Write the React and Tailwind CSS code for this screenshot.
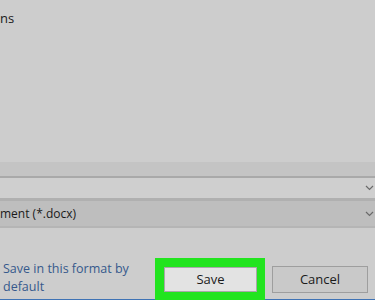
import React from "react";

function Chevron() {
  return (
    <svg width="9" height="6" viewBox="0 0 9 6" className="shrink-0">
      <path d="M1 1 L4.5 4.5 L8 1" fill="none" stroke="#6a6a6a" strokeWidth="1.2" />
    </svg>
  );
}

export default function App() {
  return (
    <div
      className="w-[375px] h-[300px] overflow-hidden bg-[#cdcdcd] flex flex-col text-[#1a1a1a]"
      style={{ fontFamily: '"Open Sans", "Noto Sans", sans-serif' }}
    >
      <div className="h-[162px] pt-[9px]">
        <div className="text-[13px] leading-[18px]">ns</div>
      </div>
      <div className="h-[14px] bg-[#c4c4c4]" />
      <div className="h-[2px] bg-[#a9a9a9]" />
      <div className="h-[20px] bg-[#cfcfcf] flex items-center justify-end pr-[1px]">
        <Chevron />
      </div>
      <div className="h-[3px] bg-[#b0b0b0]" />
      <div className="h-[25px] bg-[#bebebe] flex items-center justify-between pr-[1px]">
        <span className="text-[12px] leading-[18px]">ment (*.docx)</span>
        <Chevron />
      </div>
      <div className="h-[2px] bg-[#b5b5b5]" />
      <div className="flex-1 flex flex-row">
        <div className="w-[155px] flex flex-col border-b border-[#3f73b5]">
          <div className="pt-[32px] pl-[3px] text-[12.5px] leading-[18px] text-[#36598c]">
            Save in this format by
            <br />
            default
          </div>
        </div>
        <div className="w-[110px] h-[42px] mt-auto bg-[#22e41f] p-[9px] pb-[8px] pr-[8px]">
          <div className="w-full h-full bg-[#e3e3e3] border border-[#a8a8a8] flex items-center justify-center text-[13px]">
            Save
          </div>
        </div>
        <div className="flex-1 flex flex-col border-b border-[#3f73b5]">
          <div className="ml-[7px] mt-[38px] w-[96px] h-[27px] bg-[#c9c9c9] border border-[#9e9e9e] flex items-center justify-center text-[13px]">
            Cancel
          </div>
        </div>
      </div>
    </div>
  );
}
